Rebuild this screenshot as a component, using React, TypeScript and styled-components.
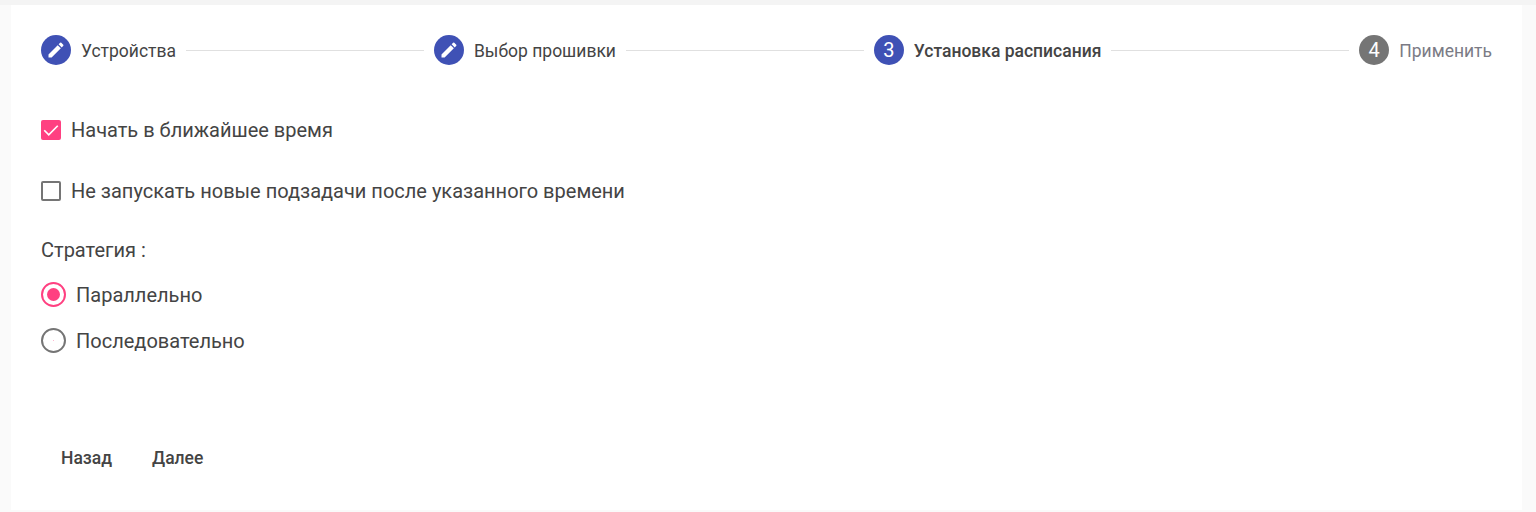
import React from "react";
import styled, { createGlobalStyle } from "styled-components";

const GlobalStyle = createGlobalStyle`
    html, body {
        margin: 0;
        padding: 0;
        background: #fafafa;
        font-family: Roboto, "Liberation Sans", sans-serif;
    }
`;

const Page = styled.div`
    height: 512px;
    padding: 5px 14px 2px 11px;
    box-sizing: border-box;
    overflow: hidden;
    background: linear-gradient(#f4f4f4 0, #f4f4f4 5px, #fafafa 5px);
`;

const Card = styled.div`
    height: 505px;
    box-sizing: border-box;
    padding: 30px 30px 0;
    background: #fff;
    display: flex;
    flex-direction: column;
`;

const Stepper = styled.div`
    display: flex;
    align-items: center;
    height: 30px;
`;

const Step = styled.div`
    display: flex;
    align-items: center;
    flex: none;
`;

const StepCircle = styled.div<{ $grey?: boolean }>`
    width: 30px;
    height: 30px;
    border-radius: 50%;
    background: ${(p) => (p.$grey ? "#757575" : "#3f51b5")};
    color: #fff;
    font-size: 20px;
    display: flex;
    align-items: center;
    justify-content: center;
`;

const StepLabel = styled.div<{ $active?: boolean; $muted?: boolean }>`
    margin-left: 10px;
    padding-top: 2px;
    font-size: 17.5px;
    font-weight: ${(p) => (p.$active ? 500 : 400)};
    color: ${(p) => (p.$muted ? "#7b7b85" : "#444")};
`;

const StepLine = styled.div`
    flex: 1;
    height: 1px;
    margin: 0 10px;
    background: #e0e0e0;
`;

const CheckRow = styled.label<{ $top: number }>`
    display: flex;
    align-items: center;
    height: 24px;
    margin-top: ${(p) => p.$top}px;
    font-size: 20px;
    color: #444;
`;

const CheckBox = styled.span<{ $checked?: boolean }>`
    width: 20px;
    height: 20px;
    box-sizing: border-box;
    margin-right: 10px;
    border-radius: 2px;
    border: ${(p) => (p.$checked ? "0" : "2px solid #757575")};
    background: ${(p) => (p.$checked ? "#ff4081" : "transparent")};
    display: flex;
    align-items: center;
    justify-content: center;
`;

const StrategyLabel = styled.div`
    margin-top: 35px;
    height: 24px;
    line-height: 24px;
    font-size: 20px;
    color: #444;
`;

const RadioRow = styled.label<{ $top: number }>`
    display: flex;
    align-items: center;
    height: 25px;
    margin-top: ${(p) => p.$top}px;
    font-size: 20px;
    color: #444;
`;

const RadioOuter = styled.span<{ $checked?: boolean }>`
    width: 25px;
    height: 25px;
    box-sizing: border-box;
    margin-right: 10px;
    border-radius: 50%;
    border: 2px solid ${(p) => (p.$checked ? "#ff4081" : "#757575")};
    display: flex;
    align-items: center;
    justify-content: center;
`;

const RadioDot = styled.span<{ $idle?: boolean }>`
    width: ${(p) => (p.$idle ? 1 : 13)}px;
    height: ${(p) => (p.$idle ? 1 : 13)}px;
    border-radius: 50%;
    background: #ff4081;
    opacity: ${(p) => (p.$idle ? 0.5 : 1)};
`;

const Actions = styled.div`
    display: flex;
    margin-top: 87px;
`;

const Button = styled.button`
    height: 36px;
    padding: 0 20px;
    border: 0;
    background: transparent;
    font-family: inherit;
    font-size: 17.5px;
    font-weight: 500;
    color: #444;
`;

const PencilIcon = () => (
    <svg width="20" height="20" viewBox="0 0 24 24" fill="#fff">
        <path d="M3 17.25V21h3.75L17.81 9.94l-3.75-3.75L3 17.25zM20.71 7.04a1 1 0 0 0 0-1.41l-2.34-2.34a1 1 0 0 0-1.41 0l-1.83 1.83 3.75 3.75 1.83-1.83z" />
    </svg>
);

const CheckIcon = () => (
    <svg width="18" height="18" viewBox="0 0 16 16" fill="none" stroke="#fff" strokeWidth="1.5">
        <path d="M2 8.2l4 4L14 4.2" />
    </svg>
);

const App = () => {
    return (
        <Page>
            <GlobalStyle />
            <Card>
                <Stepper>
                    <Step>
                        <StepCircle>
                            <PencilIcon />
                        </StepCircle>
                        <StepLabel>Устройства</StepLabel>
                    </Step>
                    <StepLine />
                    <Step>
                        <StepCircle>
                            <PencilIcon />
                        </StepCircle>
                        <StepLabel>Выбор прошивки</StepLabel>
                    </Step>
                    <StepLine />
                    <Step>
                        <StepCircle>3</StepCircle>
                        <StepLabel $active>Установка расписания</StepLabel>
                    </Step>
                    <StepLine />
                    <Step>
                        <StepCircle $grey>4</StepCircle>
                        <StepLabel $muted>Применить</StepLabel>
                    </Step>
                </Stepper>
                <CheckRow $top={53}>
                    <CheckBox $checked>
                        <CheckIcon />
                    </CheckBox>
                    Начать в ближайшее время
                </CheckRow>
                <CheckRow $top={37}>
                    <CheckBox />
                    Не запускать новые подзадачи после указанного времени
                </CheckRow>
                <StrategyLabel>Стратегия :</StrategyLabel>
                <RadioRow $top={20}>
                    <RadioOuter $checked>
                        <RadioDot />
                    </RadioOuter>
                    Параллельно
                </RadioRow>
                <RadioRow $top={21}>
                    <RadioOuter>
                        <RadioDot $idle />
                    </RadioOuter>
                    Последовательно
                </RadioRow>
                <Actions>
                    <Button>Назад</Button>
                    <Button>Далее</Button>
                </Actions>
            </Card>
        </Page>
    );
};

export default App;
